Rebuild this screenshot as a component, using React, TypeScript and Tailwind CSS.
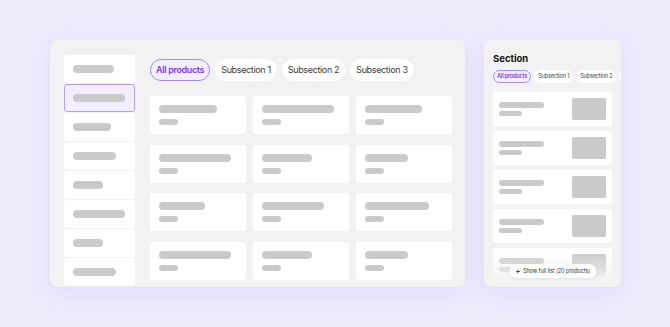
import React from 'react';

const sideBars = [41, 52, 38, 43, 30, 52, 30, 43];
const gridBars = [58, 72, 57, 72, 50, 43, 46, 62, 64, 72, 50, 43];
const chips = ['All products', 'Subsection 1', 'Subsection 2', 'Subsection 3'];

const App = () => {
  return (
    <div
      className="w-[670px] h-[327px] bg-[#EFEBFD] flex items-start pt-[40px] pl-[50px] gap-[19px] overflow-hidden"
      style={{ fontFamily: 'Inter, "Noto Sans", sans-serif' }}
    >
      {/* Main catalogue panel */}
      <div className="w-[415px] h-[247px] bg-[#F2F2F2] rounded-[7px] shadow-[0_6px_24px_rgba(110,80,220,0.10)] flex items-start pt-[15px] pl-[14px] overflow-hidden">
        <div className="w-[71px] h-[230px] flex flex-col gap-px overflow-hidden rounded-[3px] shrink-0">
          {sideBars.map((w, i) => (
            <div
              key={i}
              className={
                i === 1
                  ? 'h-[28px] shrink-0 rounded-[3px] bg-[#F2EEFE] border border-[#B59CFB] flex items-center pl-[8px]'
                  : 'h-[28px] shrink-0 rounded-[3px] bg-white flex items-center pl-[9px]'
              }
            >
              <div className="h-[8px] rounded-full bg-[#CACACA]" style={{ width: w }} />
            </div>
          ))}
        </div>

        <div className="ml-[15px] w-[302px] pt-[4px]">
          <div className="flex gap-[5px]">
            {chips.map((c, i) => (
              <div
                key={c}
                className={
                  i === 0
                    ? 'h-[22px] px-[5px] rounded-full border border-[#A78BFA] bg-[#F2EEFE] text-[#7C3AED] font-semibold text-[9px] tracking-[-0.35px] flex items-center whitespace-nowrap'
                    : 'h-[22px] px-[5px] rounded-full border border-white bg-white text-[#3B3B3B] text-[9px] tracking-[-0.35px] flex items-center whitespace-nowrap'
                }
              >
                {c}
              </div>
            ))}
          </div>

          <div className="mt-[15px] grid grid-cols-3 gap-x-[7px] gap-y-[10.5px]">
            {gridBars.map((w, i) => (
              <div key={i} className="h-[38px] bg-white rounded-[3px] pt-[9px] pl-[9px]">
                <div className="h-[8px] rounded-full bg-[#CACACA]" style={{ width: w }} />
                <div className="mt-[6px] h-[6px] w-[19px] rounded-full bg-[#CACACA]" />
              </div>
            ))}
          </div>
        </div>
      </div>

      {/* Side section panel */}
      <div className="relative w-[137px] h-[247px] bg-[#F2F2F2] rounded-[7px] shadow-[0_6px_24px_rgba(110,80,220,0.10)] overflow-hidden pt-[12px] px-[9px]">
        <div className="text-[9.5px] font-bold text-[#141414] leading-[14px]">Section</div>
        <div className="mt-[3.5px] flex gap-[3px] w-[200px]">
          {chips.map((c, i) => (
            <div
              key={c}
              className={
                i === 0
                  ? 'h-[13.5px] px-[3px] rounded-full border border-[#A78BFA] bg-[#F2EEFE] text-[#7C3AED] font-semibold text-[5.6px] tracking-[-0.2px] flex items-center whitespace-nowrap'
                  : 'h-[13.5px] px-[3px] rounded-full border border-white bg-white text-[#444] text-[5.6px] tracking-[-0.2px] flex items-center whitespace-nowrap'
              }
            >
              {c}
            </div>
          ))}
        </div>

        <div className="relative mt-[9px] h-[190px] overflow-hidden">
          <div className="flex flex-col gap-[5px]">
            {[0, 1, 2, 3, 4].map((i) => (
              <div key={i} className="h-[34px] shrink-0 bg-white rounded-[3px] flex items-start justify-between px-[6px]">
                <div className="pt-[10px]">
                  <div className="h-[5.5px] w-[45px] rounded-full bg-[#CACACA]" />
                  <div className="mt-[3px] h-[5.5px] w-[23px] rounded-full bg-[#CACACA]" />
                </div>
                <div className="mt-[6px] w-[34px] h-[22px] rounded-[2px] bg-[#CACACA]" />
              </div>
            ))}
          </div>
          <div className="absolute left-0 right-0 bottom-0 h-[30px] bg-gradient-to-b from-[#F2F2F2]/0 to-[#F2F2F2]" />
        </div>

        <div className="absolute left-1/2 -translate-x-1/2 bottom-[9px] h-[14px] px-[6px] rounded-full bg-white shadow-[0_1px_4px_rgba(0,0,0,0.08)] flex items-center gap-[3px] whitespace-nowrap text-[5.5px] tracking-[-0.1px] text-[#333]">
          <svg width="5" height="5" viewBox="0 0 10 10" fill="none" stroke="#333" strokeWidth="1.6">
            <path d="M5 1v8M1 5h8" />
          </svg>
          <span>Show full list (20 products)</span>
        </div>
      </div>
    </div>
  );
};

export default App;
